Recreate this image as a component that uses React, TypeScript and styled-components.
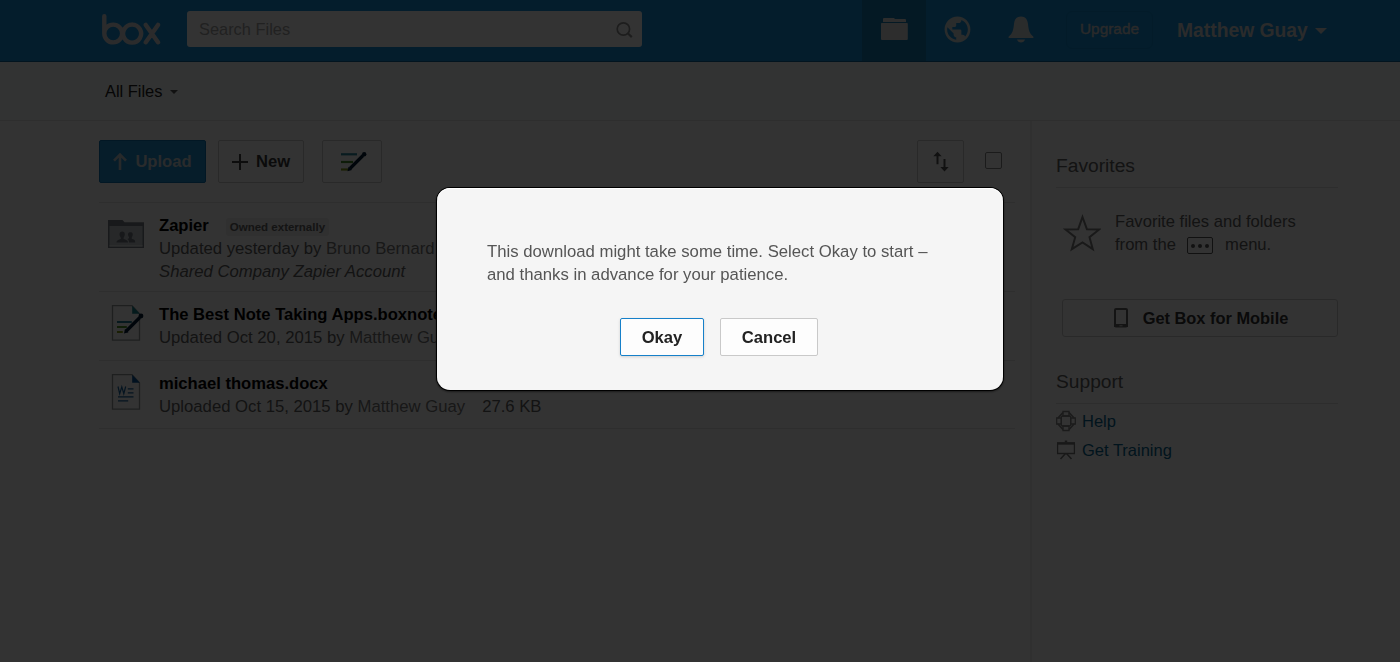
import styled, { createGlobalStyle } from 'styled-components';

const files = [
	{ name: 'Zapier', tag: 'Owned externally', meta: 'Updated yesterday by ', user: 'Bruno Bernard', note: 'Shared Company Zapier Account', icon: 'folder', height: 89 },
	{ name: 'The Best Note Taking Apps.boxnote', meta: 'Updated Oct 20, 2015 by ', user: 'Matthew Guay', icon: 'note', height: 69 },
	{ name: 'michael thomas.docx', meta: 'Uploaded Oct 15, 2015 by ', user: 'Matthew Guay', size: '27.6 KB', icon: 'word', height: 68 },
];

const Logo = () => (
	<svg width="60" height="34" viewBox="101 12 60 34" fill="none" stroke="#d4d8da" strokeWidth="4.4" strokeLinecap="round">
		<path d="M104.3 16.200V33.6a8.9 8.9 0 1 0 8.9-9 8.9 8.9 0 0 0-8.900 9M132.100 24.600a9 9 0 1 0 .01 0M145.800 24.900l12.200 17.400M158 24.900l-12.200 17.400" />
	</svg>
);

const FolderIcon = () => (
	<svg width="36" height="28" viewBox="0 0 36 28">
		<path d="M0 0h14.5l2 2.2H36V28H0z" fill="#787f88" />
		<path d="M1.5 6h33v20.5h-33z" fill="#c2c8cc" />
		<path d="M1.5 25.2h33v1.3h-33z" fill="#e4e7ea" />
		<path d="M8.5 22.5c0-2 1.2-2.7 4-3.6.6-.3.5-1.1-.1-2-1.6-2.5-.9-5.5 1.8-5.5s3.4 3 1.8 5.5c-.6.9-.7 1.7 0 2 2.8.9 4 1.6 4 3.600zM21 22.5c0-1.8-.6-2.6-1.7-3.4 1.2-.6 2.3-.9 1.6-2.2-1.7-2.6-.8-4.7 1.5-4.7s3.2 2.1 1.6 4.7c-.7 1.2-.3 1.8 1.2 2.3 1.5.5 2 1.3 2 3.300z" fill="#727983" />
	</svg>
);

const NoteIcon = () => (
	<svg width="36" height="37" viewBox="0 0 36 37" fill="none">
		<path d="M4.5.7H24l7.5 8v26.500h-27z" fill="#fdfdfd" stroke="#969a9c" strokeWidth="1.3" />
		<path d="M24.2.7v8h7.6z" fill="#16828c" />
		<path d="M9 17h14.8" stroke="#267f98" strokeWidth="2" />
		<path d="M9 22h9.8" stroke="#4f982c" strokeWidth="2" />
		<path d="M9 27h5.8" stroke="#809c17" strokeWidth="2" />
		<path d="M17.8 26.5l14-14" stroke="#001b35" strokeWidth="3.2" />
		<path d="M16 28.5l1-4.5 3.5 3.2z" fill="#001b35" />
		<circle cx="33" cy="11" r="2.4" fill="#001b35" />
	</svg>
);

const WordIcon = () => (
	<svg width="36" height="37" viewBox="0 0 36 37" fill="none">
		<path d="M4.5.7H24l7.5 8v26.500h-27z" fill="#fdfdfd" stroke="#969a9c" strokeWidth="1.3" />
		<path d="M24.2.7v8h7.6z" fill="#08589e" />
		<path d="M10 12.5l1.7 7.2 2.1-6.8 2 6.8 1.9-7.2" stroke="#17639f" strokeWidth="1.2" />
		<path d="M19.8 14.8h5.7M19.8 18.9h5.7M10 22.9h15.5M10 26.9h10.2" stroke="#17639f" strokeWidth="1.2" />
	</svg>
);

const fileIcons: any = { folder: <FolderIcon />, note: <NoteIcon />, word: <WordIcon /> };

const App = () => {
	return (
		<>
			<GlobalStyle />
			<Page>
				<TopBar>
					<LogoCon><Logo /></LogoCon>
					<SearchBox>
						<span>Search Files</span>
						<svg width="17" height="17" viewBox="0 0 17 17" fill="none" stroke="#909090" strokeWidth="1.7">
							<circle cx="7.4" cy="8" r="6.2" />
							<path d="M11.8 12.300l4 3.800" strokeWidth="2.2" />
						</svg>
					</SearchBox>
					<NavIcon $active>
						<svg width="27" height="22" viewBox="0 0 27 22" fill="#dedede">
							<path d="M3 0h10l1 1h10a1 1 0 0 1 1 1v2H2V1a1 1 0 0 1 1-1zM1 5h25a.8.8 0 0 1 .8.8V21a1 1 0 0 1-1 1H1a1 1 0 0 1-1-1V5.8A.8.8 0 0 1 1 5z" />
						</svg>
					</NavIcon>
					<NavIcon>
						<svg width="31" height="31" viewBox="0 0 24 24" fill="#d3d9dc">
							<path d="M12 2C6.48 2 2 6.48 2 12s4.48 10 10 10 10-4.48 10-10S17.52 2 12 2zm-1 17.93c-3.95-.49-7-3.85-7-7.93 0-.62.08-1.21.21-1.79L9 15v1c0 1.1.9 2 2 2v1.93zm6.9-2.54c-.26-.81-1-1.39-1.9-1.39h-1v-3c0-.55-.45-1-1-1H8v-2h2c.55 0 1-.45 1-1V7h2c1.1 0 2-.9 2-2v-.41c2.93 1.19 5 4.06 5 7.41 0 2.08-.8 3.97-2.1 5.39z" />
						</svg>
					</NavIcon>
					<NavIcon>
						<svg width="26" height="27" viewBox="0 0 26 27" fill="#d3d9dc">
							<path d="M13 .5c-4.6 0-6.500 3-7 7.500-.6 5.800-1.500 9.800-5.200 12.400-.7.6-.4 1.600.4 1.600h23.600c.8 0 1.100-1 .4-1.600C21.500 17.800 20.600 13.800 20 8c-.5-4.500-2.400-7.500-7-7.500zM9 23.500h8c-.6 2-2 3-4 3s-3.400-1-4-3z" />
						</svg>
					</NavIcon>
					<Upgrade>Upgrade</Upgrade>
					<UserName>Matthew Guay<Caret $size={6} $color="#d4d6d8" /></UserName>
				</TopBar>

				<Crumbs>All Files<Caret $size={4} $color="#555" /></Crumbs>

				<Body>
					<Main>
						<Toolbar>
							<ToolButton $width={107} $primary>
								<svg width="14" height="17" viewBox="0 0 14 17" fill="none" stroke="#c3cdd3" strokeWidth="2.6">
									<path d="M7 17V2M1 7.600l6-6 6 6" />
								</svg>
								Upload
							</ToolButton>
							<ToolButton $width={86} $left={12}>
								<svg width="16" height="16" viewBox="0 0 16 16" stroke="#444" strokeWidth="2">
									<path d="M8 0v16M0 8h16" />
								</svg>
								New
							</ToolButton>
							<ToolButton $width={60} $left={17.5}>
								<NoteGlyph width="28" height="21" viewBox="0 0 28 21" fill="none">
									<path d="M1 3.300h16" stroke="#28859b" strokeWidth="2.200" />
									<path d="M1 11h12" stroke="#488b31" strokeWidth="2.200" />
									<path d="M1 18.500h7" stroke="#839c18" strokeWidth="2.200" />
									<path d="M10 17.500L23 4.500" stroke="#001b35" strokeWidth="3.200" />
									<path d="M7.500 20.300l1-4.500 3.500 3.200z" fill="#001b35" />
									<circle cx="24.200" cy="3.200" r="2.200" fill="#001b35" />
								</NoteGlyph>
							</ToolButton>
							<Spacer />
							<ToolButton $width={47}>
								<svg width="16" height="21" viewBox="0 0 16 21">
									<path d="M4.500.7l4.200 4.600H5.500v8h-2v-8H.3zM11.500 20.500l-4.200-4.600h3.200v-8h2v8h3.200z" fill="#555" />
								</svg>
							</ToolButton>
							<CheckBox />
						</Toolbar>
						{files.map((file) => (
							<FileRow key={file.name} $height={file.height}>
								<FileIconCon $folder={file.icon === 'folder'}>{fileIcons[file.icon]}</FileIconCon>
								<div>
									<FileName>{file.name}{file.tag && <Tag>{file.tag}</Tag>}</FileName>
									<FileMeta>{file.meta}<b>{file.user}</b>{file.size && <FileSize>{file.size}</FileSize>}</FileMeta>
									{file.note && <FileMeta as="em">{file.note}</FileMeta>}
								</div>
							</FileRow>
						))}
					</Main>

					<Side>
						<SideTitle>Favorites</SideTitle>
						<FavoriteHint>
							<svg width="38" height="38" viewBox="0 0 38 38" fill="none" stroke="#7d7d7d" strokeWidth="2">
								<path d="M19.500 3l4.400 12.200 12.300.3-9.700 7.700L29.800 35.200 19.500 28.400 8.800 35.200l3.400-12-9.700-7.700 12.700-.3z" />
							</svg>
							<p>
								Favorite files and folders<br />
								from the <MoreBox><i /><i /><i /></MoreBox> menu.
							</p>
						</FavoriteHint>
						<MobileButton>
							<svg width="14" height="20" viewBox="0 0 14 20" fill="none">
								<rect x="1" y="1" width="12" height="17.500" rx="1" stroke="#666" strokeWidth="2" />
								<path d="M0 17.500h14" stroke="#666" strokeWidth="3" />
								<path d="M5.500 17.800h3" stroke="#ddd" strokeWidth="1" />
							</svg>
							Get Box for Mobile
						</MobileButton>
						<SideTitle $support>Support</SideTitle>
						<SupportLink>
							<svg width="20" height="22" viewBox="0 0 20 22" fill="none" stroke="#858585" strokeWidth="1.300">
								<path d="M7 1.500h6v4.500H7zM7 16h6v4.500H7zM.7 8h4.600v6H.7zM14.700 8h4.600v6h-4.600z" />
								<rect x="5.300" y="6" width="9.400" height="10" rx="1.500" />
								<path d="M7 2.500L2 8M13 2.500l5 5.500M2 14l5 5.500M18 14l-5 5.500" strokeWidth="1.800" />
							</svg>
							Help
						</SupportLink>
						<SupportLink>
							<svg width="20" height="20" viewBox="0 0 20 20" fill="none" stroke="#7b7b7b" strokeWidth="1.300">
								<path d="M1.600 4v9.500h16.800V4" />
								<path d="M1 3.400h18" strokeWidth="2.600" />
								<path d="M10 .5v2" strokeWidth="2.500" />
								<path d="M9.500 13.500L4.500 19M10.500 13.500l5 5.500" strokeWidth="1.600" />
							</svg>
							Get Training
						</SupportLink>
					</Side>
				</Body>
			</Page>

			<Overlay>
				<Dialog role="dialog">
					<p>This download might take some time. Select Okay to start –<br />and thanks in advance for your patience.</p>
					<Actions>
						<DialogButton $width={84} $focus>Okay</DialogButton>
						<DialogButton $width={98}>Cancel</DialogButton>
					</Actions>
				</Dialog>
			</Overlay>
		</>
	);
};
export default App;

const GlobalStyle = createGlobalStyle`
	* { box-sizing: border-box; }
	body {
		margin: 0;
		font-family: "Liberation Sans", Arial, sans-serif;
		font-size: 16.6px;
		background: #fff;
	}
	p { margin: 0; }
	svg { flex: none; }
	button { font-family: inherit; }
`;

const Page = styled.div`
	height: 662px;
	overflow: hidden;
	display: flex;
	flex-direction: column;
	white-space: nowrap;
`;

const TopBar = styled.div`
	height: 62px;
	flex: none;
	display: flex;
	background-color: #1491da;
	border-bottom: 1px solid #0a6399;
`;

const LogoCon = styled.div`
	width: 186px;
	padding: 12px 0 0 101px;
`;

const SearchBox = styled.div`
	width: 455px;
	height: 36px;
	margin: 11px 220px 0 1px;
	padding: 0 9px 0 12px;
	display: flex;
	align-items: center;
	justify-content: space-between;
	background-color: #fff;
	border-radius: 3px;
	color: #a5a5a5;
	font-size: 16.4px;
`;

const NavIcon = styled.div<{ $active?: boolean }>`
	width: ${(p) => (p.$active ? 64 : 63)}px;
	padding-bottom: 3px;
	display: flex;
	align-items: center;
	justify-content: center;
	background-color: ${(p) => (p.$active ? '#147db5' : 'transparent')};
`;

const Upgrade = styled.div`
	width: 87px;
	height: 38px;
	margin: 11px 0 0 14px;
	padding-bottom: 2px;
	display: flex;
	align-items: center;
	justify-content: center;
	border: 1px solid #1087cc;
	border-radius: 6px;
	color: #cfcfcf;
	font-size: 15.4px;
	-webkit-text-stroke: 0.4px #cfcfcf;
`;

const UserName = styled.div`
	margin-left: 24px;
	display: flex;
	align-items: center;
	gap: 7px;
	color: #d4d6d8;
	font-size: 19.3px;
	font-weight: bold;
`;

const Caret = styled.span<{ $size: number; $color: string }>`
	border: ${(p) => p.$size}px solid transparent;
	border-top-color: ${(p) => p.$color};
	border-bottom: 0;
	margin-top: 1px;
`;

const Crumbs = styled.div`
	height: 59px;
	flex: none;
	padding: 0 0 0 105px;
	display: flex;
	align-items: center;
	gap: 8px;
	background-color: #fafffc;
	border-bottom: 1px solid #e6e6e6;
	color: #222;
	font-size: 16.4px;
`;

const Body = styled.div`
	flex: 1;
	display: flex;
`;

const Main = styled.div`
	width: 1030px;
	padding: 19px 15px 0 99px;
`;

const Toolbar = styled.div`
	height: 62px;
	display: flex;
	align-items: flex-start;
`;

const ToolButton = styled.div<{ $width: number; $left?: number; $primary?: boolean }>`
	width: ${(p) => p.$width}px;
	height: 43px;
	margin-left: ${(p) => p.$left || 0}px;
	display: flex;
	align-items: center;
	justify-content: center;
	gap: 8px;
	background-color: ${(p) => (p.$primary ? '#2090d0' : '#fff')};
	border: 1px solid ${(p) => (p.$primary ? '#0a74b6' : '#ccc')};
	border-radius: 2px;
	color: ${(p) => (p.$primary ? '#ccd4d9' : '#3a3a3a')};
	font-size: 16.6px;
	font-weight: bold;
`;

const NoteGlyph = styled.svg`
	margin-left: 4px;
`;

const Spacer = styled.div`
	flex: 1;
`;

const CheckBox = styled.div`
	width: 17px;
	height: 17px;
	margin: 12px 13px 0 21px;
	border: 1.5px solid #888;
	border-radius: 2px;
`;

const FileRow = styled.div<{ $height: number }>`
	height: ${(p) => p.$height}px;
	padding: 11px 0 0 8px;
	display: flex;
	border-top: 1px solid #e6e6e6;
	&:last-child {
		height: 69px;
		border-bottom: 1px solid #e6e6e6;
	}
`;

const FileIconCon = styled.div<{ $folder: boolean }>`
	width: 52px;
	padding: ${(p) => (p.$folder ? '6px 0 0 .5px' : '2px 0 0 .5px')};
`;

const FileName = styled.div`
	height: 23px;
	display: flex;
	align-items: center;
	color: #000;
	font-weight: bold;
`;

const Tag = styled.span`
	height: 18px;
	margin: 2px 0 0 17px;
	padding: 0 4px;
	display: flex;
	align-items: center;
	background-color: #ededed;
	border-radius: 3px;
	color: #666;
	font-size: 11.5px;
`;

const FileMeta = styled.div`
	display: block;
	line-height: 23px;
	color: #606060;
	font-size: 16.7px;
	b {
		font-weight: normal;
		color: #777;
	}
`;

const FileSize = styled.span`
	margin-left: 17px;
`;

const Side = styled.div`
	width: 308px;
	padding-left: 24px;
	border-left: 2px solid #ededed;
	color: #606060;
`;

const SideTitle = styled.div<{ $support?: boolean }>`
	height: ${(p) => (p.$support ? 47 : 67)}px;
	margin-top: ${(p) => (p.$support ? 20 : 0)}px;
	padding-top: ${(p) => (p.$support ? 13 : 33)}px;
	border-bottom: 1px solid #e2e2e2;
	line-height: 23px;
	font-size: 19.2px;
`;

const FavoriteHint = styled.div`
	height: 111px;
	padding: 22px 0 0 7px;
	display: flex;
	gap: 14px;
	line-height: 23px;
	svg {
		margin-top: 4px;
	}
`;

const MoreBox = styled.span`
	width: 26px;
	height: 17px;
	margin: 0 7px;
	display: inline-flex;
	align-items: center;
	justify-content: center;
	gap: 3px;
	border: 1px solid #555;
	border-radius: 2px;
	vertical-align: middle;
	i {
		width: 4px;
		height: 4px;
		border-radius: 50%;
		background-color: #555;
	}
`;

const MobileButton = styled.div`
	height: 38px;
	margin-left: 6px;
	padding-left: 2px;
	display: flex;
	align-items: center;
	justify-content: center;
	gap: 15px;
	border: 1px solid #ccc;
	border-radius: 3px;
	color: #333;
	font-size: 16.4px;
	font-weight: bold;
`;

const SupportLink = styled.div`
	height: 29px;
	padding-top: 5px;
	display: flex;
	align-items: center;
	gap: 6px;
	color: #066591;
	font-size: 16.5px;
`;

const Overlay = styled.div`
	position: fixed;
	inset: 0;
	padding: 188px 0 0 437px;
	background-color: rgba(0, 0, 0, 0.8);
`;

const Dialog = styled.div`
	width: 566px;
	height: 202px;
	padding: 52px 50px 0;
	background-color: #f5f5f5;
	border-radius: 13px;
	box-shadow: 0 0 0 1px #000, 0 1px 3px #000, inset 0 1px 0 #fff;
	color: #555;
	font-size: 16.73px;
	line-height: 23px;
	white-space: nowrap;
`;

const Actions = styled.div`
	margin-top: 32px;
	padding-right: 2px;
	display: flex;
	justify-content: center;
	gap: 16px;
`;

const DialogButton = styled.button<{ $width: number; $focus?: boolean }>`
	width: ${(p) => p.$width}px;
	height: 38px;
	padding: 2px 0 0;
	background-color: #fdfdfd;
	border: 1px solid ${(p) => (p.$focus ? '#1680c9' : '#c9c9c9')};
	border-radius: 2px;
	box-shadow: ${(p) => (p.$focus ? '0 1px 3px rgba(0, 0, 0, 0.15)' : 'none')};
	color: #222;
	font-size: 16.6px;
	font-weight: bold;
	cursor: pointer;
`;
